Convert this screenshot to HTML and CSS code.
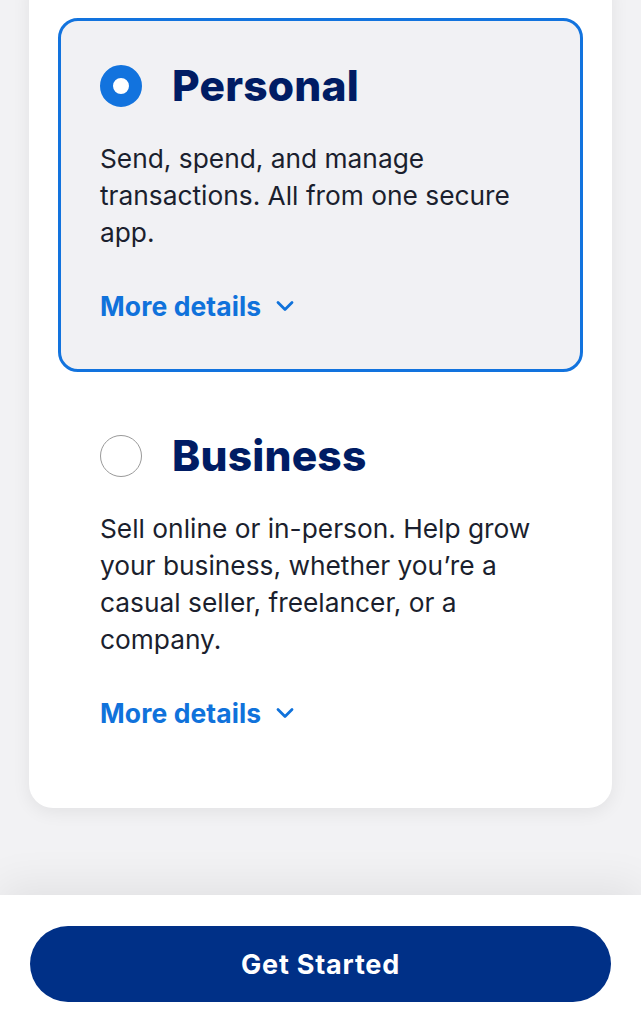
FILE: index.html
```html
<!DOCTYPE html>
<html lang="en">
<head>
<meta charset="utf-8">
<title>Choose account type</title>
<link rel="stylesheet" href="styles.css">
</head>
<body>
<div class="page">
  <main class="content">
    <section class="card">
      <div class="option option--selected">
        <div class="option-head">
          <span class="radio radio--on"></span>
          <h2 class="option-title">Personal</h2>
        </div>
        <p class="option-desc">Send, spend, and manage transactions. All from one secure app.</p>
        <a class="more" href="#">More details
          <svg class="chev" viewBox="0 0 20 12" width="20" height="12"><path d="M3 2.5l7 7 7-7" fill="none" stroke="currentColor" stroke-width="2.8" stroke-linecap="round" stroke-linejoin="round"/></svg>
        </a>
      </div>
      <div class="option">
        <div class="option-head">
          <span class="radio"></span>
          <h2 class="option-title">Business</h2>
        </div>
        <p class="option-desc">Sell online or in-person. Help grow your business, whether you’re a casual seller, freelancer, or a company.</p>
        <a class="more" href="#">More details
          <svg class="chev" viewBox="0 0 20 12" width="20" height="12"><path d="M3 2.5l7 7 7-7" fill="none" stroke="currentColor" stroke-width="2.8" stroke-linecap="round" stroke-linejoin="round"/></svg>
        </a>
      </div>
    </section>
  </main>
  <footer class="footer">
    <button class="cta" type="button">Get Started</button>
  </footer>
</div>
</body>
</html>
```

FILE: styles.css
```css
* { box-sizing: border-box; }
html, body { margin: 0; padding: 0; }
body {
  background: #f2f2f4;
  font-family: Inter, "Noto Sans", sans-serif;
  color: #1b1f2e;
}
.page {
  height: 1024px;
  display: flex;
  flex-direction: column;
  overflow: hidden;
}
.content {
  flex: 1;
  padding: 0 29px;
}
.card {
  margin-top: -30px;
  background: #fff;
  border-radius: 24px;
  padding: 48px 29px 0;
  height: 838px;
  box-shadow: 0 4px 18px rgba(0, 0, 0, 0.07);
}
.option {
  border: 3px solid transparent;
  border-radius: 20px;
  padding: 44px 39px 0;
}
.option--selected {
  background: #f1f1f4;
  border-color: #1273de;
  height: 354px;
}
.option + .option {
  padding-top: 60px;
}
.option-head {
  display: flex;
  align-items: center;
  gap: 30px;
  height: 42px;
}
.radio {
  width: 42px;
  height: 42px;
  border-radius: 50%;
  border: 1.5px solid #9a9a9a;
  background: #fff;
  flex: none;
}
.radio--on {
  border: 13px solid #1273de;
}
.option-title {
  margin: 0;
  font-size: 42.5px;
  font-weight: 800;
  letter-spacing: 0.2px;
  color: #001c64;
  line-height: 42px;
}
.option-desc {
  margin: 33px 0 0;
  font-size: 26.3px;
  line-height: 37px;
  color: #1b1f2e;
  max-width: 440px;
}
.more {
  display: inline-flex;
  align-items: center;
  gap: 14px;
  margin-top: 39px;
  font-size: 26.5px;
  line-height: 32px;
  font-weight: 700;
  color: #1072db;
  text-decoration: none;
  letter-spacing: 0.1px;
}
.chev { display: block; }
.footer {
  height: 129px;
  flex: none;
  background: #fff;
  box-shadow: 0 -10px 40px rgba(0, 0, 0, 0.07);
  padding: 31px 30px 0 30px;
  position: relative;
}
.cta {
  width: 100%;
  height: 76px;
  border: none;
  border-radius: 38px;
  background: #003087;
  color: #fff;
  font-family: Inter, "Noto Sans", sans-serif;
  font-size: 27px;
  font-weight: 700;
  letter-spacing: 0.8px;
}
```
